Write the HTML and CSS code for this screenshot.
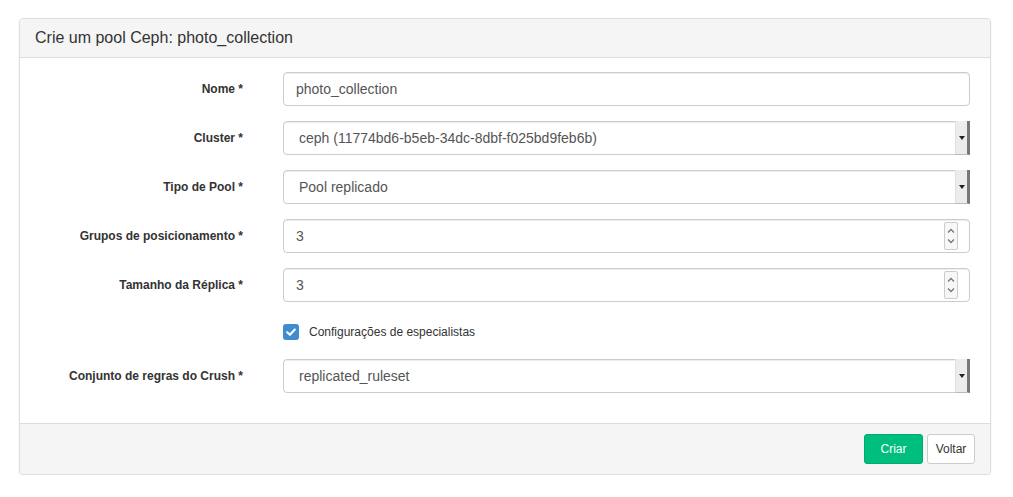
FILE: index.html
```html
<!DOCTYPE html>
<html lang="pt">
<head>
<meta charset="utf-8">
<title>Crie um pool Ceph</title>
<link rel="stylesheet" href="styles.css">
</head>
<body>
<div class="panel">
  <div class="panel-heading"><h3 class="panel-title">Crie um pool Ceph: photo_collection</h3></div>
  <div class="panel-body">
    <div class="form-row">
      <label class="control-label">Nome *</label>
      <div class="control input">photo_collection</div>
    </div>
    <div class="form-row">
      <label class="control-label">Cluster *</label>
      <div class="control select"><span class="val">ceph (11774bd6-b5eb-34dc-8dbf-f025bd9feb6b)</span><span class="arrow"><span class="tri"></span></span></div>
    </div>
    <div class="form-row">
      <label class="control-label">Tipo de Pool *</label>
      <div class="control select"><span class="val">Pool replicado</span><span class="arrow"><span class="tri"></span></span></div>
    </div>
    <div class="form-row">
      <label class="control-label">Grupos de posicionamento *</label>
      <div class="control input number"><span class="val">3</span>
        <span class="spin">
          <svg width="12" height="26" viewBox="0 0 12 26"><path d="M3 9.5 L6 6.5 L9 9.5" fill="none" stroke="#777" stroke-width="1.3"/><path d="M3 16.5 L6 19.5 L9 16.5" fill="none" stroke="#777" stroke-width="1.3"/></svg>
        </span>
      </div>
    </div>
    <div class="form-row">
      <label class="control-label">Tamanho da Réplica *</label>
      <div class="control input number"><span class="val">3</span>
        <span class="spin">
          <svg width="12" height="26" viewBox="0 0 12 26"><path d="M3 9.5 L6 6.5 L9 9.5" fill="none" stroke="#777" stroke-width="1.3"/><path d="M3 16.5 L6 19.5 L9 16.5" fill="none" stroke="#777" stroke-width="1.3"/></svg>
        </span>
      </div>
    </div>
    <div class="form-row check-row">
      <span></span>
      <div class="checkbox">
        <span class="box"><svg width="16" height="16" viewBox="0 0 16 16"><path d="M4.2 8.2 L6.9 10.8 L11.8 5.6" fill="none" stroke="#fff" stroke-width="2.2" stroke-linecap="round" stroke-linejoin="round"/></svg></span>
        <span class="check-label">Configurações de especialistas</span>
      </div>
    </div>
    <div class="form-row last">
      <label class="control-label">Conjunto de regras do Crush *</label>
      <div class="control select"><span class="val">replicated_ruleset</span><span class="arrow"><span class="tri"></span></span></div>
    </div>
  </div>
  <div class="panel-footer">
    <button class="btn btn-primary">Criar</button>
    <button class="btn btn-default">Voltar</button>
  </div>
</div>
</body>
</html>
```

FILE: styles.css
```css
html, body {
  margin: 0;
  padding: 0;
  background: #fff;
}
body {
  font-family: "Liberation Sans", Arial, Helvetica, sans-serif;
  font-size: 14px;
  color: #333;
  padding: 18px 21px 0 19px;
}
.panel {
  border: 1px solid #ddd;
  border-radius: 4px;
  background: #fff;
  box-shadow: 0 1px 2px rgba(0,0,0,0.08);
  width: 970px;
}
.panel-heading {
  background: #f5f5f5;
  border-bottom: 1px solid #ddd;
  border-radius: 3px 3px 0 0;
  padding: 10px 15px;
}
.panel-title {
  margin: 0;
  font-size: 16px;
  font-weight: normal;
  line-height: 18px;
  color: #333;
}
.panel-body {
  padding: 14px 21px 15px 14px;
}
.form-row {
  display: grid;
  grid-template-columns: 209px 687px;
  column-gap: 40px;
  align-items: center;
  margin-bottom: 15px;
}
.control-label {
  text-align: right;
  font-weight: bold;
  font-size: 12px;
  color: #333;
}
.control {
  box-sizing: border-box;
  height: 34px;
  border: 1px solid #ccc;
  border-radius: 4px;
  background: #fff;
  box-shadow: inset 0 1px 1px rgba(0,0,0,0.075);
  font-size: 14px;
  color: #555;
  display: flex;
  align-items: center;
  padding: 0 12px;
}
.select {
  padding: 0 0 0 15px;
  justify-content: space-between;
  border-radius: 4px 2px 2px 4px;
}
.select .arrow {
  align-self: stretch;
  width: 11px;
  background: #ececec;
  border-left: 1px solid #e0e0e0;
  border-right: 3px solid #777;
  border-bottom: 1px solid #bbb;
  display: flex;
  align-items: center;
  justify-content: center;
  margin: -1px -1px -1px 0;
}
.select .tri {
  width: 0;
  height: 0;
  border-left: 3px solid transparent;
  border-right: 3px solid transparent;
  border-top: 4px solid #222;
}
.number {
  justify-content: space-between;
  padding-right: 11px;
}
.spin {
  box-sizing: border-box;
  width: 14px;
  height: 28px;
  border: 1px solid #ccc;
  border-radius: 2px;
  background: #f7f7f7;
  display: flex;
  align-items: center;
  justify-content: center;
}
.check-row {
  height: 27px;
}
.checkbox {
  display: flex;
  align-items: center;
  padding-top: 2px;
}
.box {
  width: 16px;
  height: 16px;
  border-radius: 3px;
  background: #3f8dd0;
  display: inline-block;
  margin-right: 10px;
}
.box svg { display: block; }
.check-label {
  font-size: 12px;
  color: #333;
}
.panel-footer {
  background: #f5f5f5;
  border-top: 1px solid #ddd;
  border-radius: 0 0 3px 3px;
  padding: 10px 15px;
  display: flex;
  justify-content: flex-end;
  gap: 4px;
}
.btn {
  font-family: "Liberation Sans", Arial, Helvetica, sans-serif;
  font-size: 12px;
  height: 30px;
  border-radius: 3px;
  padding: 0 10px;
  border: 1px solid;
  cursor: pointer;
}
.btn-primary {
  width: 59px;
  background: #00be7d;
  border-color: #00a96f;
  color: #fff;
}
.btn-default {
  width: 48px;
  padding: 0;
  background: #fff;
  border-color: #ccc;
  color: #333;
}
```
